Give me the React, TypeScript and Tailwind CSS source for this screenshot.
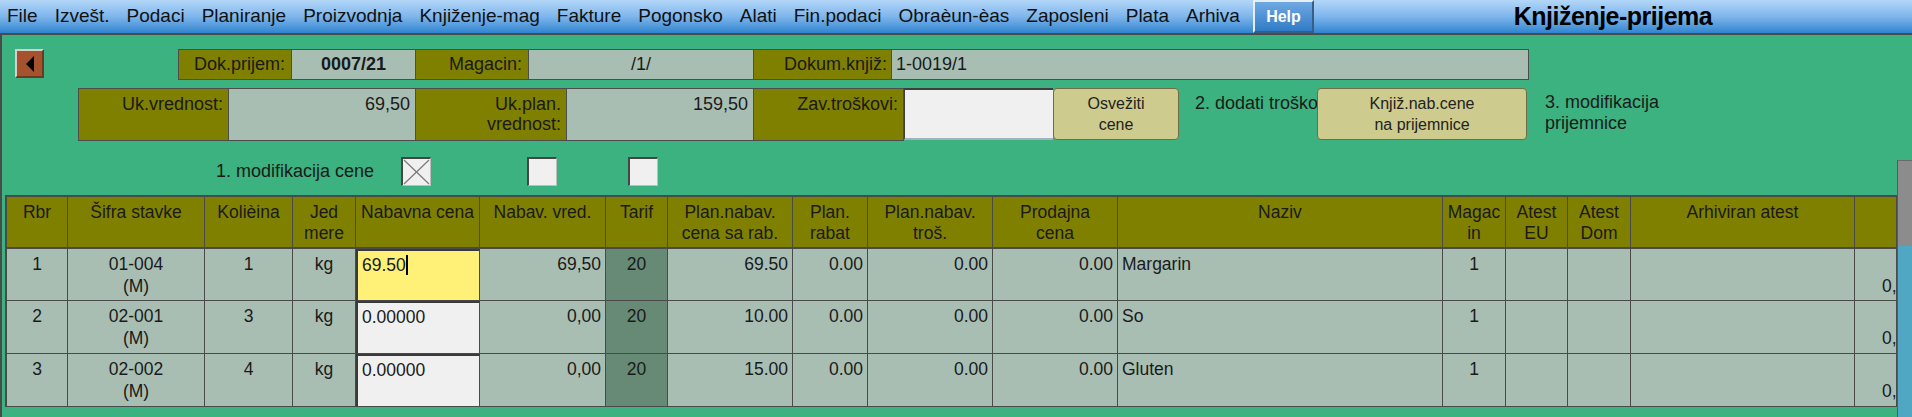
import React from 'react';

const menuItems = [
  'File',
  'Izvešt.',
  'Podaci',
  'Planiranje',
  'Proizvodnja',
  'Knjiženje-mag',
  'Fakture',
  'Pogonsko',
  'Alati',
  'Fin.podaci',
  'Obraèun-èas',
  'Zaposleni',
  'Plata',
  'Arhiva',
];

type Row = {
  rbr: string;
  sifra: string;
  kol: string;
  jm: string;
  nab: string;
  active: boolean;
  vred: string;
  tarif: string;
  plan: string;
  rabat: string;
  tros: string;
  prod: string;
  naziv: string;
  mag: string;
  h: string;
};

const rows: Row[] = [
  { rbr: '1', sifra: '01-004', kol: '1', jm: 'kg', nab: '69.50', active: true, vred: '69,50', tarif: '20', plan: '69.50', rabat: '0.00', tros: '0.00', prod: '0.00', naziv: 'Margarin', mag: '1', h: 'h-[52px]' },
  { rbr: '2', sifra: '02-001', kol: '3', jm: 'kg', nab: '0.00000', active: false, vred: '0,00', tarif: '20', plan: '10.00', rabat: '0.00', tros: '0.00', prod: '0.00', naziv: 'So', mag: '1', h: 'h-[53px]' },
  { rbr: '3', sifra: '02-002', kol: '4', jm: 'kg', nab: '0.00000', active: false, vred: '0,00', tarif: '20', plan: '15.00', rabat: '0.00', tros: '0.00', prod: '0.00', naziv: 'Gluten', mag: '1', h: 'h-[53px]' },
];

const cols =
  'grid grid-cols-[61px_137px_88px_63px_124px_126px_62px_125px_75px_125px_125px_325px_63px_62px_63px_224px_42px]';

function Head({ children }: { children?: React.ReactNode }) {
  return (
    <div className="h-[52px] bg-[#808000] border-r border-b-2 border-[#4a4a4a] text-center pt-[5px] leading-[21px] whitespace-nowrap overflow-hidden text-[#1a1a1a]">
      {children}
    </div>
  );
}

function Cell({
  children,
  align = 'center',
  dark = false,
}: {
  children?: React.ReactNode;
  align?: 'center' | 'right' | 'left';
  dark?: boolean;
}) {
  const a =
    align === 'right'
      ? 'text-right pr-[4px]'
      : align === 'left'
      ? 'text-left pl-[4px]'
      : 'text-center';
  return (
    <div
      className={`border-r border-b border-[#4a4a4a] pt-[4px] leading-[22px] whitespace-nowrap overflow-hidden text-[#1a1a1a] ${a} ${
        dark ? 'bg-[#668a75]' : 'bg-[#a9beb3]'
      }`}>
      {children}
    </div>
  );
}

function CheckBox({ checked = false }: { checked?: boolean }) {
  return (
    <div className="w-[30px] h-[29px] bg-[#f0f0f0] border-t-2 border-l-2 border-r border-b border-t-[#454545] border-l-[#454545] border-r-[#bdbdbd] border-b-[#bdbdbd]">
      {checked && (
        <svg width="27" height="26" viewBox="0 0 27 26">
          <line x1="1" y1="1" x2="26" y2="25" stroke="#7a7a7a" strokeWidth="1.2" />
          <line x1="26" y1="1" x2="1" y2="25" stroke="#7a7a7a" strokeWidth="1.2" />
        </svg>
      )}
    </div>
  );
}

function App(): JSX.Element {
  return (
    <div className="w-[1912px] h-[417px] overflow-hidden flex flex-col font-['Liberation_Sans',Arial,sans-serif]">
      {/* menu bar */}
      <div className="h-[33px] flex bg-linear-to-b from-[#b3d6f8] via-[#7eb6ec] to-[#2d85cf] shrink-0">
        <div className="w-[1253px] shrink-0 flex items-center pl-[7px] gap-[17px] text-[19px] text-[#111] whitespace-nowrap overflow-hidden">
          {menuItems.map((m) => (
            <span key={m}>{m}</span>
          ))}
        </div>
        <div className="w-[61px] h-[33px] shrink-0 flex items-center justify-center bg-linear-to-b from-[#6fa9e2] to-[#2f7bc6] border-t-2 border-l-2 border-t-[#e6eef7] border-l-[#e6eef7] border-r-2 border-b-2 border-r-[#375e86] border-b-[#375e86] text-white font-bold text-[16px]">
          Help
        </div>
        <div className="flex-1 flex items-center justify-center font-bold text-[25px] tracking-[-0.5px] text-black">
          Knjiženje-prijema
        </div>
      </div>
      <div className="h-[2px] bg-[#4a4a4a] shrink-0" />

      {/* main panel */}
      <div className="flex-1 bg-[#3bb27f] border-l-2 border-[#4a4a4a] flex flex-col text-[18px] text-[#1a1a1a]">
        {/* row 1 */}
        <div className="flex mt-[14px] h-[31px]">
          <div className="ml-[13px] w-[29px] h-[29px] bg-[#a5532e] border-t-2 border-l-2 border-t-[#d8cfc8] border-l-[#d8cfc8] border-r-2 border-b-2 border-r-[#6a3a22] border-b-[#6a3a22] flex items-center justify-center">
            <svg width="10" height="16" viewBox="0 0 10 16">
              <polygon points="9,0 9,16 1,8" fill="#000" />
            </svg>
          </div>
          <div className="ml-[134px] w-[1351px] flex border border-[#4d4d4d]">
            <div className="w-[112px] bg-[#808000] text-right pr-[6px] leading-[29px]">Dok.prijem:</div>
            <div className="w-[124px] bg-[#a9beb3] border-l border-[#4d4d4d] text-center font-bold leading-[29px]">0007/21</div>
            <div className="w-[113px] bg-[#808000] border-l border-[#4d4d4d] text-right pr-[6px] leading-[29px]">Magacin:</div>
            <div className="w-[225px] bg-[#a9beb3] border-l border-[#4d4d4d] text-center leading-[29px]">/1/</div>
            <div className="w-[138px] bg-[#808000] border-l border-[#4d4d4d] text-right pr-[4px] leading-[29px]">Dokum.knjiž:</div>
            <div className="flex-1 bg-[#a9beb3] border-l border-[#4d4d4d] pl-[4px] leading-[29px]">1-0019/1</div>
          </div>
        </div>

        {/* row 2 */}
        <div className="flex mt-[8px] h-[53px] ml-[76px]">
          <div className="flex border border-[#4d4d4d] leading-[20px]">
            <div className="w-[149px] bg-[#808000] text-right pr-[5px] pt-[5px]">Uk.vrednost:</div>
            <div className="w-[187px] bg-[#a9beb3] border-l border-[#4d4d4d] text-right pr-[5px] pt-[5px]">69,50</div>
            <div className="w-[151px] bg-[#808000] border-l border-[#4d4d4d] text-right pr-[5px] pt-[5px]">
              Uk.plan.
              <br />
              vrednost:
            </div>
            <div className="w-[187px] bg-[#a9beb3] border-l border-[#4d4d4d] text-right pr-[5px] pt-[5px]">159,50</div>
            <div className="w-[150px] bg-[#808000] border-l border-[#4d4d4d] text-right pr-[5px] pt-[5px]">Zav.troškovi:</div>
          </div>
          <div className="w-[149px] h-[52px] bg-[#f0f0f0] border-t-2 border-l border-t-[#3e3e3e] border-l-[#3e3e3e] border-b-2 border-b-[#9fb3c4]" />
          <button
            type="button"
            className="w-[126px] h-[52px] bg-[#cdcb8d] border border-[#6e6d45] rounded-[4px] text-[16px] leading-[21px] text-[#222] flex items-center justify-center text-center">
            Osvežiti
            <br />
            cene
          </button>
          <div className="ml-[16px] w-[122px] overflow-hidden whitespace-nowrap pt-[5px] leading-[21px]">
            2. dodati troškove
          </div>
          <button
            type="button"
            className="w-[210px] h-[52px] bg-[#cdcb8d] border border-[#6e6d45] rounded-[4px] text-[16px] leading-[21px] text-[#222] flex items-center justify-center text-center">
            Knjiž.nab.cene
            <br />
            na prijemnice
          </button>
          <div className="ml-[18px] pt-[4px] leading-[21px]">
            3. modifikacija
            <br />
            prijemnice
          </div>
        </div>

        {/* lower section with table and scrollbar */}
        <div className="flex flex-1">
          <div className="flex-1 flex flex-col">
            <div className="flex items-center mt-[16px] h-[29px]">
              <span className="ml-[214px] w-[185px]">1. modifikacija cene</span>
              <CheckBox checked />
              <div className="ml-[96px]">
                <CheckBox />
              </div>
              <div className="ml-[71px]">
                <CheckBox />
              </div>
            </div>

            {/* table */}
            <div className="mt-[9px] ml-[3px] w-[1892px] border-l-2 border-t-2 border-[#4a4a4a] text-[17.5px]">
              <div className={cols}>
                <Head>Rbr</Head>
                <Head>Šifra stavke</Head>
                <Head>Kolièina</Head>
                <Head>
                  Jed
                  <br />
                  mere
                </Head>
                <Head>Nabavna cena</Head>
                <Head>Nabav. vred.</Head>
                <Head>Tarif</Head>
                <Head>
                  Plan.nabav.
                  <br />
                  cena sa rab.
                </Head>
                <Head>
                  Plan.
                  <br />
                  rabat
                </Head>
                <Head>
                  Plan.nabav.
                  <br />
                  troš.
                </Head>
                <Head>
                  Prodajna
                  <br />
                  cena
                </Head>
                <Head>Naziv</Head>
                <Head>
                  Magac
                  <br />
                  in
                </Head>
                <Head>
                  Atest
                  <br />
                  EU
                </Head>
                <Head>
                  Atest
                  <br />
                  Dom
                </Head>
                <Head>Arhiviran atest</Head>
                <Head />
              </div>
              {rows.map((r) => (
                <div key={r.rbr} className={`${cols} ${r.h}`}>
                  <Cell>{r.rbr}</Cell>
                  <Cell>
                    {r.sifra}
                    <br />
                    (M)
                  </Cell>
                  <Cell>{r.kol}</Cell>
                  <Cell>{r.jm}</Cell>
                  <div
                    className={`border-t-2 border-l-2 border-r border-b border-t-[#3a3a3a] border-l-[#3a3a3a] border-r-[#4a4a4a] border-b-[#4a4a4a] pl-[4px] pt-[3px] leading-[22px] flex items-start ${
                      r.active ? 'bg-[#fff078]' : 'bg-[#f0f0f0]'
                    }`}>
                    <span>{r.nab}</span>
                    {r.active && <span className="inline-block w-[2px] h-[20px] bg-black mt-[1px]" />}
                  </div>
                  <Cell align="right">{r.vred}</Cell>
                  <Cell dark>{r.tarif}</Cell>
                  <Cell align="right">{r.plan}</Cell>
                  <Cell align="right">{r.rabat}</Cell>
                  <Cell align="right">{r.tros}</Cell>
                  <Cell align="right">{r.prod}</Cell>
                  <Cell align="left">{r.naziv}</Cell>
                  <Cell>{r.mag}</Cell>
                  <Cell />
                  <Cell />
                  <Cell />
                  <div className="border-r border-b border-[#4a4a4a] bg-[#a9beb3] pl-[27px] pt-[26px] leading-[22px] whitespace-nowrap overflow-hidden">
                    0,00
                  </div>
                </div>
              ))}
            </div>
          </div>

          {/* scrollbar */}
          <div className="w-[15px] mt-[19px] flex flex-col border-l border-[#5a5a5a]">
            <div className="h-[86px] bg-[#8c8c8c] border-t border-[#6a6a6a]" />
            <div className="flex-1 bg-[#4fa7c3]" />
          </div>
        </div>
      </div>
    </div>
  );
}

export default App;
